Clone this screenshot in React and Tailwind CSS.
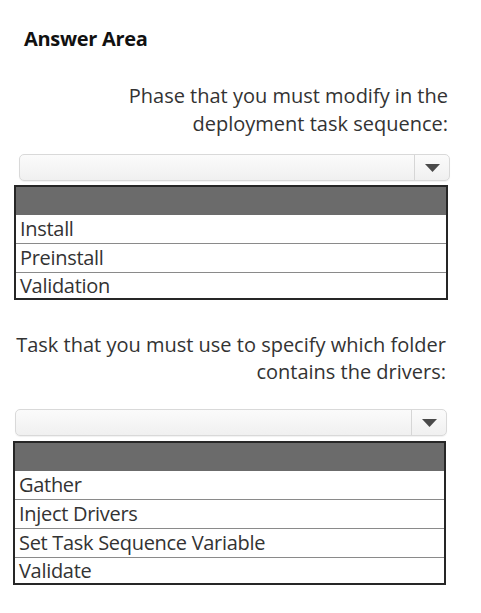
import React from "react";

function Dropdown({ className }) {
  return (
    <div
      className={
        "flex h-[27px] rounded-[5px] border border-[#d9d9d9] bg-gradient-to-b from-[#fbfbfb] to-[#f0f0f0] shadow-[0_1px_1px_rgba(0,0,0,0.06)] " +
        className
      }
    >
      <div className="flex-1" />
      <div className="flex w-[35px] items-center justify-center border-l border-[#d6d6d6]">
        <svg width="15" height="8" viewBox="0 0 15 8">
          <polygon points="0,0 15,0 7.5,8" fill="#4a4a4a" />
        </svg>
      </div>
    </div>
  );
}

function ListBox({ items, className }) {
  return (
    <div className={"border-2 border-[#262626] bg-white " + className}>
      <div className="h-[28px] bg-[#6b6b6b]" />
      {items.map((it, i) => {
        const last = i === items.length - 1;
        return (
          <div
            key={it}
            className={
              "flex items-center pl-[4px] text-[20px] leading-none tracking-[-0.3px] text-[#333333] " +
              (last ? "h-[25px]" : "h-[29px] border-b border-[#8a8a8a]")
            }
          >
            {it}
          </div>
        );
      })}
    </div>
  );
}

export default function App() {
  return (
    <div
      className="min-h-[613px] w-[481px] bg-white pt-[26px]"
      style={{ fontFamily: '"Open Sans", "Noto Sans", sans-serif' }}
    >
      <div className="pl-[24px] text-[20px] font-bold leading-[26px] tracking-[-0.3px] text-[#111111]">
        Answer Area
      </div>

      <div className="mt-[30px] pr-[33px] text-right text-[20px] leading-[28px] text-[#333333]">
        <div>Phase that you must modify in the</div>
        <div>deployment task sequence:</div>
      </div>

      <Dropdown className="ml-[19px] mr-[31px] mt-[16px]" />
      <ListBox
        className="ml-[14px] mr-[33px] mt-[4px]"
        items={["Install", "Preinstall", "Validation"]}
      />

      <div className="mt-[31px] pl-[14px] pr-[35px] text-right text-[20px] leading-[27px] text-[#333333]">
        <div className="whitespace-nowrap">Task that you must use to specify which folder</div>
        <div>contains the drivers:</div>
      </div>

      <Dropdown className="ml-[15px] mr-[34px] mt-[24px]" />
      <ListBox
        className="ml-[13px] mr-[35px] mt-[5px]"
        items={["Gather", "Inject Drivers", "Set Task Sequence Variable", "Validate"]}
      />
    </div>
  );
}
